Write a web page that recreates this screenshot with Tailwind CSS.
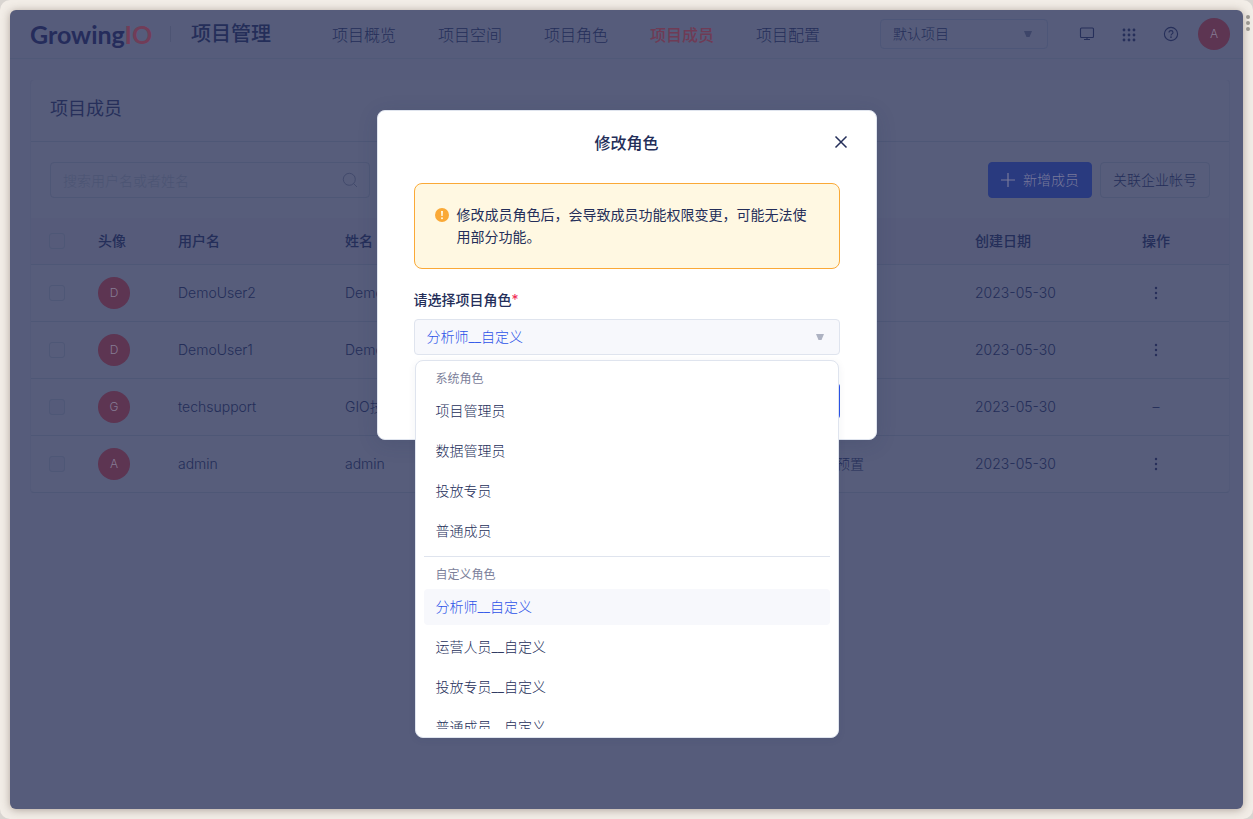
<!DOCTYPE html>
<html lang="zh-CN">
<head>
<meta charset="utf-8">
<meta name="viewport" content="width=device-width, initial-scale=1">
<title>项目成员</title>
<script src="https://cdn.jsdelivr.net/npm/@tailwindcss/browser@4"></script>
</head>
<body class="bg-[#d9d5d1] font-['Inter','Noto_Sans_CJK_SC',sans-serif] text-sm text-[#242e59]">
<div class="flex min-h-screen rounded-[10px] bg-[#f2ede7] p-[10px]">
  <div class="relative min-w-0 flex-1 overflow-hidden rounded-md bg-[#565c7b] shadow-[0_1px_8px_rgba(90,70,60,0.45)]">

    <header class="flex h-[49px] items-center border-b border-[#505978] pr-[13px] pl-5">
      <a href="#" class="w-[121px] font-['Lato',sans-serif] text-[25px] leading-7 font-bold whitespace-nowrap text-[#252c5b]">Growing<span class="text-[#713d58]">IO</span></a>
      <span class="ml-[19px] h-4 w-px bg-[#4d5473]"></span>
      <h1 class="ml-5 text-xl leading-7 font-medium">项目管理</h1>
      <nav class="ml-[61px] flex gap-[42px] pt-0.5 text-base leading-6 font-light">
        <a href="#">项目概览</a>
        <a href="#">项目空间</a>
        <a href="#">项目角色</a>
        <a href="#" class="font-medium text-[#6f3b55]">项目成员</a>
        <a href="#">项目配置</a>
      </nav>
      <div class="ml-auto flex items-center">
        <div class="relative">
          <select aria-label="项目" class="h-[30px] w-[168px] appearance-none rounded border border-[#4d5678] bg-transparent px-3 text-sm leading-5 font-light"><option>默认项目</option></select>
          <svg class="pointer-events-none absolute top-3 right-4 h-2 w-2" viewBox="0 0 8 8" fill="#3d4569"><path d="M0 0h8L5.500 6h-3z"/></svg>
        </div>
        <button aria-label="大屏" class="ml-[31px]"><svg class="block h-4 w-4" viewBox="0 0 16 16" fill="none" stroke="#262f5a" stroke-width="1.100"><rect x="1.500" y="2" width="13" height="9.500" rx="1"/><path d="M8 11.500v2M5 13.500h6"/></svg></button>
        <button aria-label="应用" class="ml-[26px]"><svg class="block h-4 w-4" viewBox="0 0 16 16" fill="#262f5a"><circle cx="3" cy="4" r="1.400"/><circle cx="8" cy="4" r="1.400"/><circle cx="13" cy="4" r="1.400"/><circle cx="3" cy="9" r="1.400"/><circle cx="8" cy="9" r="1.400"/><circle cx="13" cy="9" r="1.400"/><circle cx="3" cy="14" r="1.400"/><circle cx="8" cy="14" r="1.400"/><circle cx="13" cy="14" r="1.400"/></svg></button>
        <button aria-label="帮助" class="ml-[26px]"><svg class="block h-4 w-4" viewBox="0 0 16 16" fill="none" stroke="#262f5a" stroke-width="1.100"><circle cx="8" cy="8" r="6.600"/><path d="M6 6.600c0-1.300.9-2 2-2s2 .7 2 1.800c0 1.400-2 1.500-2 3"/><circle cx="8" cy="11.200" r=".3"/></svg></button>
        <button class="ml-[19px] h-8 w-8 rounded-full bg-[#5d3552] text-xs font-light text-[#857b94]">A</button>
      </div>
    </header>

    <main class="pt-[21px] pr-[13px] pl-5">
      <section class="rounded border border-t-0 border-[#535a79] border-b-[#4e5776] bg-[#575d7b]">
        <div class="flex h-[62px] items-center border-b border-[#4e5776] px-[19px] pb-1">
          <h2 class="text-lg leading-7 text-[#262f5a]">项目成员</h2>
        </div>
        <div class="flex h-[76px] items-center px-[19px]">
          <div class="relative">
            <input type="text" aria-label="搜索" placeholder="搜索用户名或者姓名" class="h-9 w-80 rounded border border-[#4e5776] bg-transparent px-3 font-light placeholder:text-[#4b5473]">
            <svg class="absolute top-2.5 right-3 h-4 w-4" viewBox="0 0 16 16" fill="none" stroke="#424a6c"><circle cx="7.300" cy="7.300" r="6"/><path d="m11.600 11.600 3.400 3.400"/></svg>
          </div>
          <button class="ml-auto flex h-9 items-center gap-2 rounded border border-[#293a7f] bg-[#293a7f] px-3 font-light text-[#78799a]">
            <svg class="h-3.5 w-3.5" viewBox="0 0 14 14" fill="none" stroke="currentColor" stroke-width="1.200"><path d="M7 0v14M0 7h14"/></svg>新增成员
          </button>
          <button class="ml-2 h-9 rounded border border-[#4e5776] px-3 font-light">关联企业帐号</button>
        </div>
        <table class="w-full table-fixed text-left font-light">
          <colgroup><col class="w-[51px]"><col class="w-20"><col class="w-[167px]"><col class="w-[167px]"><col><col class="w-[167px]"><col class="w-[167px]"><col class="w-[103px]"></colgroup>
          <thead class="bg-[#565b7a]">
            <tr class="h-[46px] border-b border-[#4e5776]">
              <th><input type="checkbox" aria-label="全选" class="mx-auto block h-4 w-4 appearance-none rounded-[3px] border border-[#4e5776]"></th>
              <th class="px-4 font-medium">头像</th><th class="px-4 font-medium">用户名</th><th class="px-4 font-medium">姓名</th><th></th><th></th><th class="px-4 font-medium">创建日期</th><th class="px-4 font-medium">操作</th>
            </tr>
          </thead>
          <tbody>
            <tr class="h-[57px] border-b border-[#4e5776]">
              <td><input type="checkbox" aria-label="选择 DemoUser2" class="mx-auto block h-4 w-4 appearance-none rounded-[3px] border border-[#4e5776]"></td>
              <td class="px-4"><span class="flex h-8 w-8 items-center justify-center rounded-full bg-[#5d3552] text-xs text-[#857b94]">D</span></td>
              <td class="px-4">DemoUser2</td><td class="px-4">DemoUser2</td><td></td><td></td><td class="px-4">2023-05-30</td>
              <td class="px-4"><button aria-label="更多" class="flex w-7 justify-center"><svg class="h-4 w-4" viewBox="0 0 16 16" fill="#262f5a"><circle cx="8" cy="3" r="1.200"/><circle cx="8" cy="8" r="1.200"/><circle cx="8" cy="13" r="1.200"/></svg></button></td>
            </tr>
            <tr class="h-[57px] border-b border-[#4e5776]">
              <td><input type="checkbox" aria-label="选择 DemoUser1" class="mx-auto block h-4 w-4 appearance-none rounded-[3px] border border-[#4e5776]"></td>
              <td class="px-4"><span class="flex h-8 w-8 items-center justify-center rounded-full bg-[#5d3552] text-xs text-[#857b94]">D</span></td>
              <td class="px-4">DemoUser1</td><td class="px-4">DemoUser1</td><td></td><td></td><td class="px-4">2023-05-30</td>
              <td class="px-4"><button aria-label="更多" class="flex w-7 justify-center"><svg class="h-4 w-4" viewBox="0 0 16 16" fill="#262f5a"><circle cx="8" cy="3" r="1.200"/><circle cx="8" cy="8" r="1.200"/><circle cx="8" cy="13" r="1.200"/></svg></button></td>
            </tr>
            <tr class="h-[57px] border-b border-[#4e5776]">
              <td><input type="checkbox" disabled aria-label="选择 techsupport" class="mx-auto block h-4 w-4 appearance-none rounded-[3px] border border-[#4e5776] bg-[#555b7a]"></td>
              <td class="px-4"><span class="flex h-8 w-8 items-center justify-center rounded-full bg-[#5d3552] text-xs text-[#857b94]">G</span></td>
              <td class="px-4">techsupport</td><td class="px-4">GIO技术</td><td></td><td></td><td class="px-4">2023-05-30</td>
              <td class="px-4"><span class="block w-7 text-center">–</span></td>
            </tr>
            <tr class="h-[57px]">
              <td><input type="checkbox" disabled aria-label="选择 admin" class="mx-auto block h-4 w-4 appearance-none rounded-[3px] border border-[#4e5776] bg-[#555b7a]"></td>
              <td class="px-4"><span class="flex h-8 w-8 items-center justify-center rounded-full bg-[#5d3552] text-xs text-[#857b94]">A</span></td>
              <td class="px-4">admin</td><td class="px-4">admin</td><td></td><td class="px-4">系统预置</td><td class="px-4">2023-05-30</td>
              <td class="px-4"><button aria-label="更多" class="flex w-7 justify-center"><svg class="h-4 w-4" viewBox="0 0 16 16" fill="#262f5a"><circle cx="8" cy="3" r="1.200"/><circle cx="8" cy="8" r="1.200"/><circle cx="8" cy="13" r="1.200"/></svg></button></td>
            </tr>
          </tbody>
        </table>
      </section>
    </main>

    <div class="absolute inset-0 flex items-start justify-center pt-[100px]">
      <div role="dialog" aria-labelledby="dialog-title" class="w-[500px] rounded-lg border border-[#dfe4ee] bg-white px-9 pt-5 pb-5 shadow-[0_4px_20px_rgba(36,46,89,0.15)]">
        <div class="relative flex h-6 items-center justify-center">
          <h2 id="dialog-title" class="text-base leading-6 font-medium">修改角色</h2>
          <button aria-label="关闭" class="absolute top-1 -right-2"><svg class="block h-3.5 w-3.5" viewBox="0 0 14 14" fill="none" stroke="#242e59" stroke-width="1.500"><path d="m1.500 1.500 11 11M12.500 1.500l-11 11"/></svg></button>
        </div>
        <div class="mt-7 flex gap-2 rounded-lg border border-[#faa937] bg-[#fff8e2] p-5">
          <svg class="mt-1 h-3.5 w-3.5 shrink-0" viewBox="0 0 14 14"><circle cx="7" cy="7" r="7" fill="#faa937"/><path d="M6 3h2l-.3 5H6.300z" fill="#fff8e2"/><circle cx="7" cy="10.200" r="1" fill="#fff8e2"/></svg>
          <p class="w-[350px] leading-[22px]">修改成员角色后，会导致成员功能权限变更，可能无法使用部分功能。</p>
        </div>
        <label for="role" class="mt-5 block leading-[22px] font-medium">请选择项目角色<span class="font-normal text-[#f0264f]">*</span></label>
        <div class="relative mt-2">
          <select id="role" class="block h-9 w-full appearance-none rounded border border-[#dfe4ee] bg-[#f7f8fc] px-3 text-sm font-light text-[#2c53e8]"><option>分析师__自定义</option></select>
          <svg class="pointer-events-none absolute top-3.5 right-4 h-2 w-2" viewBox="0 0 8 8" fill="#adb2c2"><path d="M0 1h8L5.500 7h-3z"/></svg>
          <div class="absolute inset-x-px top-[41px] rounded-lg border border-[#dfe4ee] bg-white p-2 shadow-[0_2px_8px_rgba(36,46,89,0.06)]">
            <ul role="listbox" aria-label="项目角色" class="flex h-[360px] flex-col gap-1 overflow-hidden font-light">
              <li role="presentation" class="shrink-0 px-3 text-xs leading-5 font-normal text-[#7c819b]">系统角色</li>
              <li role="option" class="shrink-0 rounded px-3 leading-9">项目管理员</li>
              <li role="option" class="shrink-0 rounded px-3 leading-9">数据管理员</li>
              <li role="option" class="shrink-0 rounded px-3 leading-9">投放专员</li>
              <li role="option" class="shrink-0 rounded px-3 leading-9">普通成员</li>
              <li role="separator" class="mt-[3px] mb-1 h-px shrink-0 bg-[#dfe4ee]"></li>
              <li role="presentation" class="shrink-0 px-3 text-xs leading-5 font-normal text-[#7c819b]">自定义角色</li>
              <li role="option" aria-selected="true" class="shrink-0 rounded bg-[#f7f8fc] px-3 leading-9 text-[#2c53e8]">分析师__自定义</li>
              <li role="option" class="shrink-0 rounded px-3 leading-9">运营人员__自定义</li>
              <li role="option" class="shrink-0 rounded px-3 leading-9">投放专员__自定义</li>
              <li role="option" class="shrink-0 rounded px-3 leading-9">普通成员__自定义</li>
            </ul>
          </div>
        </div>
        <div class="mt-7 flex justify-end">
          <button aria-label="确定" class="h-9 w-16 rounded bg-[#2c53e8]"></button>
        </div>
      </div>
    </div>
  </div>
  <div class="absolute top-[15px] right-[3px] flex flex-col gap-0.5"><i class="h-1 w-1 rounded-full bg-[#99958f]"></i><i class="h-1 w-1 rounded-full bg-[#99958f]"></i><i class="h-1 w-1 rounded-full bg-[#99958f]"></i></div>
</div>
</body>
</html>
